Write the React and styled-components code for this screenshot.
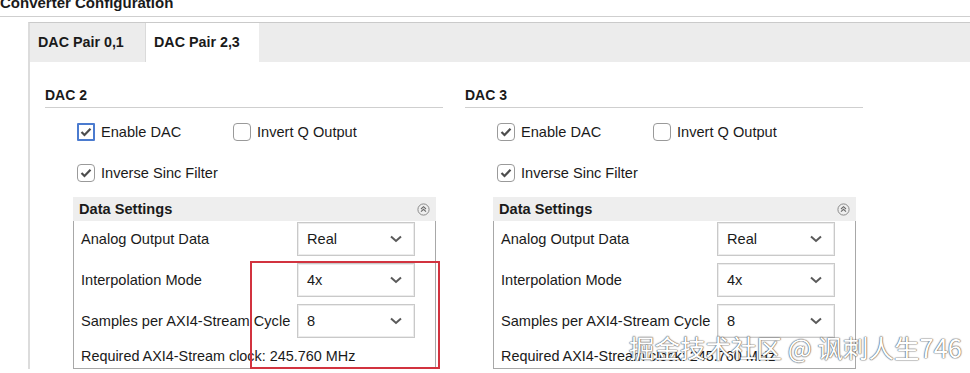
import styled, { createGlobalStyle } from "styled-components";

const Global = createGlobalStyle`
  html, body {
    margin: 0;
    padding: 0;
    background: #fff;
    overflow: hidden;
  }
  body {
    font-family: "Liberation Sans", Arial, sans-serif;
    color: #1a1a1a;
  }
`;

const Page = styled.div`
  position: relative;
  width: 970px;
  height: 373px;
  overflow: hidden;
`;

const Title = styled.div`
  height: 16px;
  line-height: 6px;
  font-size: 15px;
  font-weight: bold;
  border-bottom: 1px solid #cfcfcf;
`;

const TabFrame = styled.div`
  margin: 5px 0 0 28px;
  border-left: 2px solid #dcdcdc;
  border-top: 1px solid #cacaca;
`;

const TabBar = styled.div`
  display: flex;
  height: 39px;
  background: #ececec;
`;

const Tab = styled.div`
  width: ${(p) => (p.$active ? "114px" : "115px")};
  padding-left: 8px;
  box-sizing: border-box;
  line-height: 39px;
  font-size: 14.3px;
  font-weight: bold;
  background: ${(p) => (p.$active ? "#fff" : "transparent")};
  border-left: ${(p) => (p.$active ? "1px solid #dadada" : "none")};
`;

const Content = styled.div`
  display: flex;
  gap: 22px;
  padding: 21px 0 0 15px;
  background: #fff;
`;

const Column = styled.div`
  position: relative;
  width: 398px;
  display: flex;
  flex-direction: column;
`;

const Heading = styled.div`
  line-height: 24px;
  font-size: 14px;
  font-weight: bold;
  border-bottom: 1px solid #cfcfcf;
`;

const CheckRow = styled.div`
  display: flex;
  align-items: center;
  height: 20px;
  margin-top: ${(p) => p.$gap}px;
  padding-left: 32px;
`;

const CheckItem = styled.label`
  display: flex;
  align-items: center;
  gap: 6px;
  width: ${(p) => (p.$wide ? "156px" : "auto")};
  font-size: 14.6px;
`;

const Box = styled.span`
  display: inline-flex;
  align-items: center;
  justify-content: center;
  width: 18px;
  height: 18px;
  box-sizing: border-box;
  border-radius: ${(p) => (p.$focus ? "1px" : "4px")};
  border: ${(p) => (p.$focus ? "2px solid #4b7bcf" : "1px solid #9a9a9a")};
  background: #fff;
`;

const Group = styled.div`
  margin: 14px 0 0 28px;
  width: 363px;
`;

const GroupHead = styled.div`
  display: flex;
  align-items: center;
  justify-content: space-between;
  height: 24px;
  padding: 0 6px;
  background: #eeeeee;
  font-size: 14.6px;
  font-weight: bold;
`;

const GroupBody = styled.div`
  border: 1px solid #a8a8a8;
  border-top: none;
  padding: 1px 0 2px 7px;
  display: grid;
  grid-template-columns: 216px 118px;
  row-gap: 7px;
  align-items: center;
`;

const Label = styled.div`
  font-size: 14.6px;
  white-space: nowrap;
`;

const Select = styled.div`
  height: 34px;
  box-sizing: border-box;
  border: 1px solid #c9c9c9;
  box-shadow: inset 0 0 0 1px #ececec;
  display: flex;
  align-items: center;
  justify-content: space-between;
  padding: 0 12px 0 9px;
  font-size: 14.6px;
`;

const Note = styled.div`
  grid-column: 1 / 3;
  line-height: 20px;
  padding-top: 1px;
  font-size: 14.4px;
`;

const Annotation = styled.div`
  position: absolute;
  left: 205px;
  top: 178px;
  width: 190px;
  height: 108px;
  box-sizing: border-box;
  border: 2px solid #d2333f;
`;

const Watermark = styled.div`
  position: absolute;
  left: 629px;
  top: 328px;
  font-family: "Noto Sans CJK SC", "Liberation Sans", sans-serif;
  font-size: 25.5px;
  color: #fff;
  white-space: nowrap;
  text-shadow: 0 0 1px #555, 0 0 1px #555, 0 0 2px rgba(0, 0, 0, 0.4);
`;

function Check({ checked, focus }) {
  return (
    <Box $focus={focus}>
      {checked && (
        <svg width="12" height="10" viewBox="0 0 12 10">
          <polyline points="1.5,5 4.5,8 10.5,1.8" fill="none" stroke="#4d4d4d" strokeWidth="2.2" />
        </svg>
      )}
    </Box>
  );
}

function Chevron() {
  return (
    <svg width="12" height="8" viewBox="0 0 12 8">
      <polyline points="1,1.5 6,6 11,1.5" fill="none" stroke="#5a5a5a" strokeWidth="2" />
    </svg>
  );
}

function Collapse() {
  return (
    <svg width="13" height="13" viewBox="0 0 13 13">
      <circle cx="6.5" cy="6.5" r="5.6" fill="none" stroke="#8a8a8a" strokeWidth="1" />
      <polyline points="4,6 6.5,3.7 9,6" fill="none" stroke="#6a6a6a" strokeWidth="1.1" />
      <polyline points="4,8.6 6.5,6.3 9,8.6" fill="none" stroke="#6a6a6a" strokeWidth="1.1" />
    </svg>
  );
}

const rows = [
  ["Analog Output Data", "Real"],
  ["Interpolation Mode", "4x"],
  ["Samples per AXI4-Stream Cycle", "8"],
];

function DacColumn({ name, focus, marked }) {
  return (
    <Column>
      <Heading>{name}</Heading>
      <CheckRow $gap={14}>
        <CheckItem $wide>
          <Check checked focus={focus} />
          Enable DAC
        </CheckItem>
        <CheckItem>
          <Check />
          Invert Q Output
        </CheckItem>
      </CheckRow>
      <CheckRow $gap={21}>
        <CheckItem>
          <Check checked />
          Inverse Sinc Filter
        </CheckItem>
      </CheckRow>
      <Group>
        <GroupHead>
          Data Settings
          <Collapse />
        </GroupHead>
        <GroupBody>
          {rows.map(([label, value]) => [
            <Label key={label}>{label}</Label>,
            <Select key={label + "-v"}>
              {value}
              <Chevron />
            </Select>,
          ])}
          <Note>Required AXI4-Stream clock: 245.760 MHz</Note>
        </GroupBody>
      </Group>
      {marked && <Annotation />}
    </Column>
  );
}

export default function App() {
  return (
    <Page>
      <Global />
      <Title>Converter Configuration</Title>
      <TabFrame>
        <TabBar>
          <Tab>DAC Pair 0,1</Tab>
          <Tab $active>DAC Pair 2,3</Tab>
        </TabBar>
        <Content>
          <DacColumn name="DAC 2" focus marked />
          <DacColumn name="DAC 3" />
        </Content>
      </TabFrame>
      <Watermark>掘金技术社区 @ 讽刺人生746</Watermark>
    </Page>
  );
}
